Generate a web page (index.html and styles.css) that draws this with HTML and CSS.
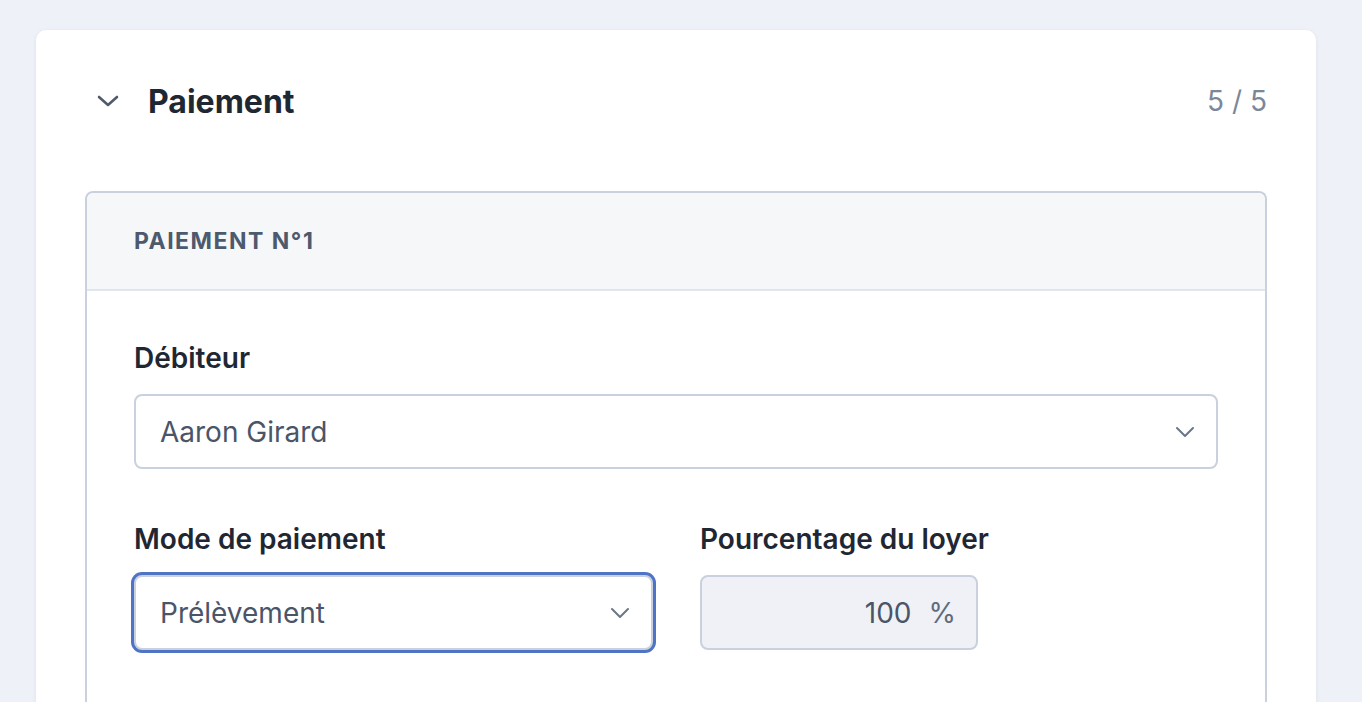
FILE: index.html
```html
<!DOCTYPE html>
<html lang="fr">
<head>
    <meta charset="UTF-8">
    <meta name="viewport" content="width=device-width, initial-scale=1.0">
    <title>Paiement</title>
    <link rel="stylesheet" href="styles.css">
</head>
<body>
    <div class="card">
        <div class="card-header">
            <svg class="toggle" width="22" height="14" viewBox="0 0 22 14">
                <path d="M2 3 L11 11 L20 3" fill="none" stroke="#4f5b6d" stroke-width="2.6" stroke-linecap="round" stroke-linejoin="round"/>
            </svg>
            <h1 class="title">Paiement</h1>
            <div class="step">5 / 5</div>
        </div>

        <div class="payment">
            <div class="payment-header">Paiement N°1</div>
            <div class="payment-body">
                <div class="field">
                    <label class="field-label">Débiteur</label>
                    <div class="select">
                        <span>Aaron Girard</span>
                        <svg width="20" height="12" viewBox="0 0 20 12"><path d="M2 2 L10 10 L18 2" fill="none" stroke="#6b7788" stroke-width="2" stroke-linecap="round" stroke-linejoin="round"/></svg>
                    </div>
                </div>

                <div class="row">
                    <div class="field">
                        <label class="field-label">Mode de paiement</label>
                        <div class="select focused">
                            <span>Prélèvement</span>
                            <svg width="20" height="12" viewBox="0 0 20 12"><path d="M2 2 L10 10 L18 2" fill="none" stroke="#6b7788" stroke-width="2" stroke-linecap="round" stroke-linejoin="round"/></svg>
                        </div>
                    </div>
                    <div class="field">
                        <label class="field-label">Pourcentage du loyer</label>
                        <div class="amount">
                            <span class="amount-value">100</span>
                            <span class="amount-unit">%</span>
                        </div>
                    </div>
                </div>
            </div>
        </div>
    </div>
</body>
</html>
```

FILE: styles.css
```css
body{
    margin: 0;
    padding: 30px 46px 0 36px;
    background: #eef1f8;
    font-family: Inter, "Noto Sans", sans-serif;
    color: #1f2733;
    height: 702px;
    box-sizing: border-box;
    overflow: hidden;
}

.card{
    background: #fff;
    border-radius: 10px;
    box-shadow: 0 1px 4px rgba(30,40,70,0.08);
    padding: 48px 48px 60px 48px;
    min-height: 800px;
}

.card-header{
    display: flex;
    align-items: center;
    height: 46px;
    padding-left: 13px;
    margin-bottom: 67px;
}

.toggle{
    margin-right: 29px;
}

.title{
    margin: 0;
    font-size: 32px;
    font-weight: 700;
    flex: 1;
}

.step{
    font-size: 28px;
    color: #7b8799;
    padding-right: 1px;
}

.payment{
    border: 2px solid #c8d1dd;
    border-radius: 8px;
    border-bottom: none;
    margin-left: 1px;
    margin-right: 1px;
}

.payment-header{
    background: #f6f7f9;
    border-radius: 8px 8px 0 0;
    border-bottom: 2px solid #e1e5ec;
    height: 96px;
    display: flex;
    align-items: center;
    padding: 0 47px;
    text-transform: uppercase;
    font-size: 23px;
    font-weight: 700;
    letter-spacing: 1.5px;
    color: #4d5a6d;
}

.payment-body{
    padding: 50px 47px 60px 47px;
}

.field{
    display: flex;
    flex-direction: column;
}

.field-label{
    font-size: 28px;
    font-weight: 600;
    line-height: 34px;
    margin-bottom: 19px;
}

.select{
    height: 75px;
    box-sizing: border-box;
    border: 2px solid #c8d1dd;
    border-radius: 8px;
    display: flex;
    align-items: center;
    justify-content: space-between;
    padding: 0 21px 0 24px;
    font-size: 28px;
    color: #4a5568;
    background: #fff;
}

.select.focused{
    box-shadow: 0 0 0 3px #4f74c6;
}

.row{
    display: grid;
    grid-template-columns: 519px 1fr;
    column-gap: 47px;
    margin-top: 53px;
}

.amount{
    width: 278px;
    height: 75px;
    box-sizing: border-box;
    border: 2px solid #c8d1dd;
    border-radius: 8px;
    background: #eff1f6;
    display: flex;
    align-items: center;
    justify-content: flex-end;
    padding-right: 20px;
    font-size: 28px;
    color: #4a5568;
}

.amount-unit{
    margin-left: 17px;
    color: #5f6b7d;
}
```
